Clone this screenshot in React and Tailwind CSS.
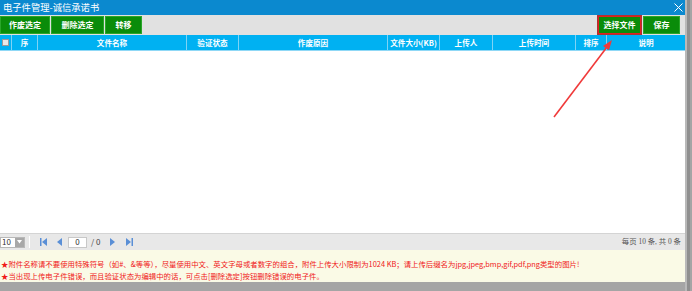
import React from "react";

const F = { fontFamily: '"Noto Sans CJK SC", "Noto Sans", sans-serif' };

const cols = [
  { w: 12, t: "" },
  { w: 26, t: "序" },
  { w: 149, t: "文件名称" },
  { w: 52, t: "验证状态" },
  { w: 149, t: "作废原因" },
  { w: 52, t: "文件大小(KB)" },
  { w: 53, t: "上传人" },
  { w: 83, t: "上传时间" },
  { w: 31, t: "排序" },
  { w: 78, t: "说明" },
];

function Btn({ children, w, red }) {
  return (
    <div
      className={
        "h-[18px] flex items-center justify-center bg-[#0a8c0a] text-white text-[8px] font-bold border " +
        (red ? "border-[#e02020] outline outline-1 outline-[#b03030]" : "border-[#2aa62a]")
      }
      style={{ width: w }}
    >
      {children}
    </div>
  );
}

export default function App() {
  return (
    <div className="w-[692px] h-[291px] bg-[#a5a5a5] relative overflow-hidden flex" style={F}>
      <div className="w-[685px] h-[282px] flex flex-col bg-white">
        {/* Title */}
        <div className="h-[15px] bg-[#0b89cf] flex items-center justify-between pl-[3px] pr-[2px]">
          <span className="text-white text-[9.3px] leading-none">电子件管理-诚信承诺书</span>
          <svg width="9" height="9" viewBox="0 0 9 9">
            <path d="M0.5 0.5 L8.5 8.5 M8.5 0.5 L0.5 8.5" stroke="white" strokeWidth="1" />
          </svg>
        </div>
        {/* Toolbar */}
        <div className="h-[20px] bg-[#e1e1e1] flex items-start pt-[1px]">
          <div className="flex gap-[1px]">
            <Btn w={50}>作废选定</Btn>
            <Btn w={53}>删除选定</Btn>
            <Btn w={37}>转移</Btn>
          </div>
          <div className="flex-1" />
          <div className="flex gap-[2px] pr-[5px]">
            <Btn w={43} red>选择文件</Btn>
            <Btn w={37}>保存</Btn>
          </div>
        </div>
        {/* Header */}
        <div className="h-[16px] bg-[#00b1f2] flex border-b border-[#8fd8f6]">
          {cols.map((c, i) => (
            <div
              key={i}
              className={
                "h-full flex items-center justify-center text-white text-[7.6px] font-bold leading-none " +
                (i < cols.length - 1 ? "border-r border-[#7fd3f5]" : "")
              }
              style={{ width: c.w }}
            >
              {i === 0 ? (
                <div className="w-[7px] h-[7px] bg-[#e8e8e8] border border-[#9a9a9a]" />
              ) : (
                c.t
              )}
            </div>
          ))}
        </div>
        {/* Body */}
        <div className="flex-1 bg-white" />
        {/* Pagination */}
        <div className="h-[17px] bg-[#e8e8e8] border-t border-[#d4d4d4] flex items-center text-[8px]">
          <div className="ml-[0px] w-[25px] h-[11px] bg-white border border-[#b8b8b8] flex items-center justify-between pl-[1px]">
            <span className="text-[8px] text-[#333] leading-none">10</span>
            <div className="w-[9px] h-[9px] bg-[#a8a8a8] flex items-center justify-center">
              <svg width="5" height="4" viewBox="0 0 5 4"><path d="M0 0 L5 0 L2.5 3.5Z" fill="white" /></svg>
            </div>
          </div>
          <div className="ml-[4px] w-[1px] h-[12px] bg-[#c4c4c4] border-r border-white" />
          <svg className="ml-[10px]" width="7" height="8" viewBox="0 0 7 8">
            <rect x="0" y="0" width="1.5" height="8" fill="#5a8fd6" />
            <path d="M7 0 L2 4 L7 8Z" fill="#5a8fd6" />
          </svg>
          <svg className="ml-[10px]" width="5" height="8" viewBox="0 0 5 8">
            <path d="M5 0 L0 4 L5 8Z" fill="#5a8fd6" />
          </svg>
          <div className="ml-[6px] w-[19px] h-[11px] bg-white border border-[#c8c8c8] flex items-center justify-center text-[8px] text-[#333] leading-none">0</div>
          <span className="ml-[4px] text-[#444] text-[8px]">/ 0</span>
          <svg className="ml-[10px]" width="5" height="8" viewBox="0 0 5 8">
            <path d="M0 0 L5 4 L0 8Z" fill="#5a8fd6" />
          </svg>
          <svg className="ml-[11px]" width="7" height="8" viewBox="0 0 7 8">
            <path d="M0 0 L5 4 L0 8Z" fill="#5a8fd6" />
            <rect x="5.5" y="0" width="1.5" height="8" fill="#5a8fd6" />
          </svg>
          <div className="flex-1" />
          <span
            className="pr-[4px] text-[7.4px] text-[#555]"
            style={{ fontFamily: '"Liberation Serif", "Noto Sans CJK SC", serif' }}
          >
            每页 10 条, 共 0 条
          </span>
        </div>
        {/* Notes */}
        <div className="h-[32px] bg-[#fafae6] flex flex-col pt-[8px] pl-[1px] text-[7.4px] text-[#f01818] leading-[12px]">
          <div>★附件名称请不要使用特殊符号（如#、&等等），尽量使用中文、英文字母或者数字的组合，附件上传大小限制为1024 KB；请上传后缀名为jpg,jpeg,bmp,gif,pdf,png类型的图片!</div>
          <div>★当出现上传电子件错误，而且验证状态为编辑中的话，可点击[删除选定]按钮删除错误的电子件。</div>
        </div>
      </div>
      {/* Right strip */}
      <div className="w-[7px] h-full flex">
        <div className="w-[2px] h-full bg-[#b9b9b9]" />
        <div className="w-[3px] h-full bg-[#8f8f8f]" />
        <div className="w-[2px] h-full bg-[#a5a5a5]" />
      </div>
      {/* Arrow overlay */}
      <svg className="absolute left-0 top-0 pointer-events-none" width="692" height="291">
        <line x1="554" y1="117" x2="607" y2="47" stroke="#f03a3a" strokeWidth="1.6" />
        <path d="M612 40 L603 46 L609 50 Z" fill="#f03a3a" />
      </svg>
    </div>
  );
}
